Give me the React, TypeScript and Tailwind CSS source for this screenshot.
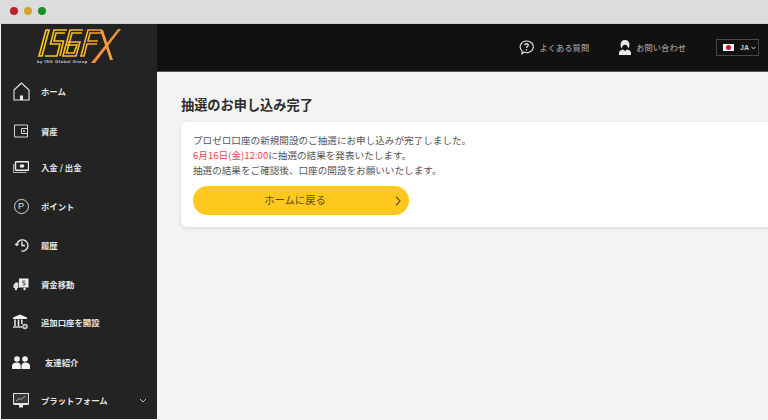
const jp = "font-['Noto_Sans_CJK_JP','Noto_Sans',sans-serif]";

function Logo() {
  return (
    <svg width="86" height="36" viewBox="0 0 86 36" fill="none" strokeWidth="1.6" strokeLinejoin="miter">
      <defs>
        <linearGradient id="lg" x1="0" x2="86" y1="0" y2="0" gradientUnits="userSpaceOnUse">
          <stop offset="0" stopColor="#ffcb1c" />
          <stop offset="0.5" stopColor="#fdb92a" />
          <stop offset="0.72" stopColor="#f99a3a" />
          <stop offset="1" stopColor="#f58a3c" />
        </linearGradient>
      </defs>
      <g stroke="url(#lg)">
        <path d="M9 2 L2 28 L5 28 L12 2 Z" />
        <path d="M30 2 L17 2 L13.500 16 L23 16 L20 28 L8 28 M28 5 L19 5 L17 13 L26.500 13 L23 28" />
        <path d="M46 2 L33 2 L26 28 L39 28 L43 14 L31 14 M45 5 L35 5 L29.500 25 L37 25 L40 17 L30 17" />
        <path d="M65 2 L51 2 L44 28 L47 28 L50 16 L60 16 M64 5 L53 5 L51 13 L61 13" />
      </g>
      <path d="M84 1 L81 1 L54 35 L58 35 Z" fill="#f58f3a" />
      <path d="M63 2 L66 2 L76 32 L73 32 Z" fill="#f79a38" />
    </svg>
  );
}

function IconHome() {
  return (
    <svg width="17" height="19" viewBox="0 0 17 19" fill="none" stroke="#e8e8e8" strokeWidth="1.100">
      <path d="M1 8 L8.500 1 L16 8 V18 H1 Z" />
      <path d="M7.500 18 V14 H9.500 V18" fill="#e8e8e8" />
    </svg>
  );
}

function IconWallet() {
  return (
    <svg width="16" height="14" viewBox="0 0 16 14" fill="none" stroke="#d8d8d8" strokeWidth="1">
      <path d="M1.500 1 H14.500 V13 H1.500 Z" />
      <path d="M14.500 4.500 H8.500 V9.500 H14.500" />
      <circle cx="11" cy="7" r="0.900" fill="#d8d8d8" stroke="none" />
    </svg>
  );
}

function IconCash() {
  return (
    <svg width="16" height="13" viewBox="0 0 16 13" fill="none">
      <rect x="2.500" y="0.800" width="13" height="8.400" rx="0.600" stroke="#f0f0f0" strokeWidth="1.400" />
      <ellipse cx="9" cy="5" rx="2.400" ry="1.800" fill="#f0f0f0" />
      <path d="M0.600 3 V11.500 H13.500" stroke="#bdbdbd" strokeWidth="1" />
    </svg>
  );
}

function IconPoint() {
  return (
    <div className="w-[15px] h-[15px] rounded-full border border-[#d8d8d8] flex items-center justify-center text-[9px] leading-none text-[#e0e0e0] font-['Liberation_Sans',sans-serif]">
      P
    </div>
  );
}

function IconHistory() {
  return (
    <svg width="15" height="14" viewBox="0 0 15 14" fill="none" stroke="#eeeeee" strokeWidth="1.300">
      <path d="M2.800 6.500 A5.600 5.600 0 1 1 7.500 13" />
      <path d="M0.300 5.800 L2.800 8.300 L5.300 5.800" fill="#eeeeee" stroke="none" />
      <path d="M8 3.500 V7.500 H11" />
    </svg>
  );
}

function IconTransfer() {
  return (
    <svg width="16" height="13" viewBox="0 0 16 13" fill="none">
      <rect x="6" y="0.500" width="9.500" height="9" fill="#ececec" />
      <path d="M12.200 3 H9.800 V5 H12 V7 H9.600" stroke="#333" strokeWidth="0.800" />
      <path d="M0.500 7 L2.500 4.500 H5.300 V10 H0.500 Z" fill="#e0e0e0" />
      <circle cx="3" cy="11" r="1.200" fill="#e8e8e8" />
      <circle cx="11.500" cy="11" r="1.200" fill="#e8e8e8" />
    </svg>
  );
}

function IconBank() {
  return (
    <svg width="16" height="16" viewBox="0 0 16 16" fill="none">
      <path d="M7 0.500 L14 3.500 V5 H0 V3.500 Z" fill="#eeeeee" />
      <path d="M2 5.500 V12 M5.500 5.500 V12 M8.800 5.500 V10" stroke="#eeeeee" strokeWidth="1.500" />
      <path d="M0 13 H9" stroke="#eeeeee" strokeWidth="1.300" />
      <circle cx="12" cy="12.500" r="2.800" fill="#cfcfcf" />
      <path d="M10.500 12.500 H13.500 M12 11 V14" stroke="#333" strokeWidth="0.800" />
    </svg>
  );
}

function IconFriends() {
  return (
    <svg width="18" height="13" viewBox="0 0 18 13" fill="#f4f4f4">
      <circle cx="5" cy="3" r="2.800" />
      <circle cx="13" cy="3" r="2.800" />
      <path d="M0 13 V10 C0 7.500 2.500 6.500 5 6.500 C7.500 6.500 8.700 7.800 8.700 10 V13 Z" />
      <path d="M9.500 13 V10 C9.500 7.800 11 6.500 13 6.500 C15.500 6.500 18 7.500 18 10 V13 Z" />
    </svg>
  );
}

function IconMonitor() {
  return (
    <svg width="16" height="15" viewBox="0 0 16 15" fill="none">
      <rect x="0.500" y="0.500" width="15" height="10" fill="#3a3a3a" stroke="#e0e0e0" strokeWidth="1" />
      <path d="M3 8 L6 5.500 L8 6.500 L12.500 3" stroke="#c8c8c8" strokeWidth="0.800" />
      <path d="M0.500 11 H15.500 V12 H0.500 Z M6 12 H10 V14.500 H6 Z" fill="#eeeeee" />
    </svg>
  );
}

const navItems = [
  { label: "ホーム", icon: <IconHome />, h: "h-[40px]" },
  { label: "資産", icon: <IconWallet />, h: "h-[36px]" },
  { label: "入金 / 出金", icon: <IconCash />, h: "h-[39px]" },
  { label: "ポイント", icon: <IconPoint />, h: "h-[39px]" },
  { label: "履歴", icon: <IconHistory />, h: "h-[39px]" },
  { label: "資金移動", icon: <IconTransfer />, h: "h-[38px]" },
  { label: "追加口座を開設", icon: <IconBank />, h: "h-[40px]" },
  { label: "友達紹介", icon: <IconFriends />, h: "h-[38px]", shift: true },
  { label: "プラットフォーム", icon: <IconMonitor />, h: "h-5", chevron: true },
];

export default function App() {
  return (
    <div className={`w-[768px] h-[420px] overflow-hidden flex flex-col bg-[#f3f3f3] ${jp}`}>
      <div className="h-6 shrink-0 bg-[#dcdcdc] flex items-center gap-[6px] pl-[10px] pb-[1px] border-b border-[#cfcfcf]">
        <span className="w-2 h-2 rounded-full bg-[#bd1f2a]" />
        <span className="w-2 h-2 rounded-full bg-[#d3a52e]" />
        <span className="w-2 h-2 rounded-full bg-[#16922a]" />
      </div>
      <div className="flex flex-1 min-h-0 pl-px pb-px">
        <aside className="w-[156px] shrink-0 bg-[#232323] flex flex-col">
          <div className="h-[57px] shrink-0 pt-[4px] pl-[36px] relative">
            <Logo />
            <span className="absolute left-[36px] top-[36px] text-[4px] leading-none tracking-[0.6px] text-[#d8d8d8] font-bold font-['Liberation_Sans',sans-serif]">
              by ISG Global Group
            </span>
          </div>
          <nav className="flex flex-col">
            {navItems.map((item) => (
              <div key={item.label} className={`${item.h} shrink-0`}>
                <div className="h-5 flex items-center pl-[11px] pr-[9px]">
                  <div className="w-[18px] flex justify-center shrink-0">{item.icon}</div>
                  <span className={`${item.shift ? "ml-[15px]" : "ml-[11px]"} text-[8.400px] font-bold leading-none text-[#e6e6e6]`}>
                    {item.label}
                  </span>
                  {item.chevron && (
                    <svg className="ml-auto mr-[1px]" width="8" height="5" viewBox="0 0 8 5" fill="none" stroke="#bdbdbd" strokeWidth="1">
                      <path d="M1 1 L4 4 L7 1" />
                    </svg>
                  )}
                </div>
              </div>
            ))}
          </nav>
        </aside>
        <div className="flex-1 min-w-0 flex flex-col">
          <header className="h-[48px] shrink-0 bg-[#111111] border-b border-[#555] flex items-center justify-end gap-[30px] pr-[9px]">
            <div className="flex items-center gap-[5px]">
              <svg width="15" height="15" viewBox="0 0 15 15" fill="none" stroke="#e4e4e4" strokeWidth="1.100">
                <path d="M7.500 1 A6.500 5.800 0 1 1 5 12 L3 14 L3 10.800 A6.500 5.800 0 0 1 7.500 1 Z" />
                <path d="M5.800 5.300 C5.800 3.200 9.300 3.200 9.300 5.300 C9.300 6.500 7.500 6.500 7.500 8" strokeWidth="1.300" />
                <circle cx="7.500" cy="9.800" r="0.800" fill="#e4e4e4" stroke="none" />
              </svg>
              <span className="text-[8.300px] font-medium text-[#9a9a9a] leading-none">よくある質問</span>
            </div>
            <div className="flex items-center gap-[5px]">
              <svg width="12" height="15" viewBox="0 0 12 15" fill="#e8e8e8">
                <path d="M6 0 C9 0 10.500 2 10.500 5 C10.500 7 9.500 8 9 8.500 C8.800 6 8 4.800 6 4.800 C4 4.800 3.200 6 3 8.500 C2.500 8 1.500 7 1.500 5 C1.500 2 3 0 6 0 Z" />
                <path d="M0 15 V12.500 C0 10.800 2 10 4 9.500 L6 11 L8 9.500 C10 10 12 10.800 12 12.500 V15 Z" />
              </svg>
              <span className="text-[8.300px] font-medium text-[#9a9a9a] leading-none">お問い合わせ</span>
            </div>
            <div className="w-[43px] h-[17px] border border-[#4a4a4a] flex items-center pl-[6px] gap-[6px]">
              <div className="w-[11px] h-[7px] bg-white flex items-center justify-center">
                <span className="w-[5px] h-[5px] rounded-full bg-[#d3102a]" />
              </div>
              <div className="flex items-center gap-[2px]">
                <span className="text-[7px] font-bold text-[#cccccc] leading-none font-['Liberation_Sans',sans-serif]">JA</span>
                <svg width="5" height="4" viewBox="0 0 5 4" fill="none" stroke="#cccccc" strokeWidth="1">
                  <path d="M0.500 0.800 L2.500 3 L4.500 0.800" />
                </svg>
              </div>
            </div>
          </header>
          <main className="flex-1 pl-6 pt-[23px]">
            <h1 className="text-[13.200px] font-bold leading-[19px] text-[#2b2b2b]">抽選のお申し込み完了</h1>
            <div className="mt-[8px] w-[620px] h-[105px] bg-white rounded-[6px] shadow-[0_1px_4px_rgba(0,0,0,0.12)] pl-3 pt-[11px]">
              <p className="text-[9.600px] leading-[15px] text-[#555555] whitespace-nowrap">
                プロゼロ口座の新規開設のご抽選にお申し込みが完了しました。
                <br />
                <span className="text-[#f0444c]">6月16日(金)12:00</span>に抽選の結果を発表いたします。
                <br />
                抽選の結果をご確認後、口座の開設をお願いいたします。
              </p>
              <div className="mt-[8px] w-[216px] h-[29px] rounded-full bg-[#ffc81e] relative flex items-center justify-center pr-3">
                <span className="text-[10.300px] text-[#5a4c1c] leading-none">ホームに戻る</span>
                <svg className="absolute right-[8px] top-[10px]" width="6" height="10" viewBox="0 0 6 10" fill="none" stroke="#4a4020" strokeWidth="1.100">
                  <path d="M1 0.700 L5 5 L1 9.300" />
                </svg>
              </div>
            </div>
          </main>
        </div>
      </div>
    </div>
  );
}
